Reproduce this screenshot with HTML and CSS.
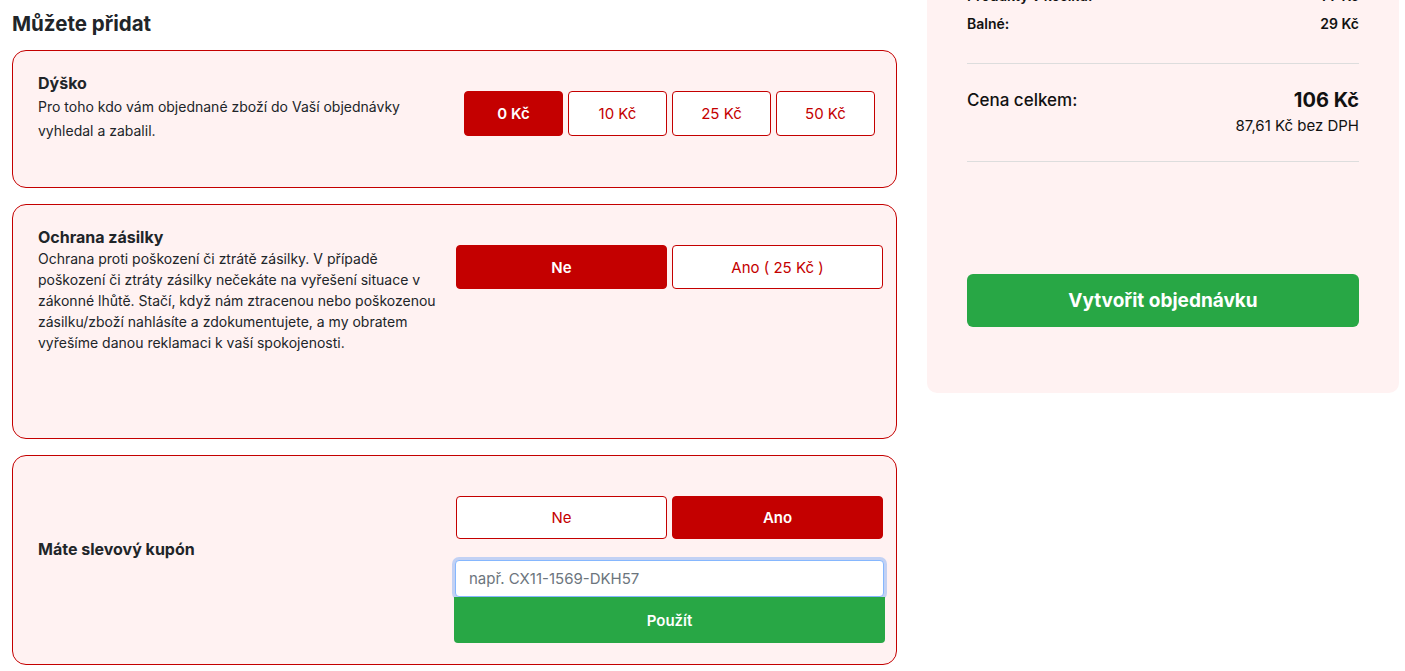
FILE: index.html
```html
<!DOCTYPE html>
<html lang="cs">
<head>
    <meta charset="UTF-8">
    <meta name="viewport" content="width=device-width, initial-scale=1.0">
    <title>Košík</title>
    <link rel="stylesheet" href="styles.css">
</head>
<body>
    <div class="checkout">
        <div class="extras">
            <h2 class="extras-title">Můžete přidat</h2>

            <div class="extra-card extra-card--tip">
                <div class="extra-text">
                    <h3 class="extra-name">Dýško</h3>
                    <p class="extra-desc extra-desc--loose">Pro toho kdo vám objednané zboží do Vaší objednávky vyhledal a zabalil.</p>
                </div>
                <div class="extra-options">
                    <div class="option-group option-group--center">
                        <button class="option-button option-button--small active">0 Kč</button>
                        <button class="option-button option-button--small">10 Kč</button>
                        <button class="option-button option-button--small">25 Kč</button>
                        <button class="option-button option-button--small">50 Kč</button>
                    </div>
                </div>
            </div>

            <div class="extra-card extra-card--protect">
                <div class="extra-text">
                    <h3 class="extra-name">Ochrana zásilky</h3>
                    <p class="extra-desc">Ochrana proti poškození či ztrátě zásilky. V případě poškození či ztráty zásilky nečekáte na vyřešení situace v zákonné lhůtě. Stačí, když nám ztracenou nebo poškozenou zásilku/zboží nahlásíte a zdokumentujete, a my obratem vyřešíme danou reklamaci k vaší spokojenosti.</p>
                </div>
                <div class="extra-options">
                    <div class="option-group">
                        <button class="option-button active">Ne</button>
                        <button class="option-button">Ano ( 25 Kč )</button>
                    </div>
                </div>
            </div>

            <div class="extra-card extra-card--coupon">
                <div class="extra-text extra-text--middle">
                    <h3 class="extra-name">Máte slevový kupón</h3>
                </div>
                <div class="extra-options">
                    <div class="option-group">
                        <button class="option-button option-button--slim">Ne</button>
                        <button class="option-button option-button--slim active">Ano</button>
                    </div>
                    <div class="coupon-form">
                        <input class="coupon-input" type="text" placeholder="např. CX11-1569-DKH57">
                        <button class="coupon-apply">Použít</button>
                    </div>
                </div>
            </div>
        </div>

        <aside class="summary">
            <div class="summary-row">
                <span>Produkty v košíku:</span>
                <span>77 Kč</span>
            </div>
            <div class="summary-row">
                <span>Balné:</span>
                <span>29 Kč</span>
            </div>
            <hr class="summary-line">
            <div class="summary-total">
                <span class="total-label">Cena celkem:</span>
                <div class="total-values">
                    <div class="total-price">106 Kč</div>
                    <div class="total-net">87,61 Kč bez DPH</div>
                </div>
            </div>
            <hr class="summary-line summary-line--bottom">
            <button class="order-button">Vytvořit objednávku</button>
        </aside>
    </div>
</body>
</html>
```

FILE: styles.css
```css
* {
    margin: 0;
    padding: 0;
    box-sizing: border-box;
}

body {
    font-family: Inter, "Noto Sans", sans-serif;
    color: #212529;
    background: #fff;
}

.checkout {
    display: grid;
    grid-template-columns: 885px 472px;
    column-gap: 30px;
    align-items: start;
    padding: 0 6px 0 12px;
}

.extras-title {
    font-size: 20.5px;
    line-height: 24px;
    font-weight: 700;
    margin: 12px 0 14px;
}

.extra-card {
    display: flex;
    background: #fff2f2;
    border: 1px solid #c40000;
    border-radius: 14px;
    padding: 22px 13px 21px 25px;
    margin-bottom: 16px;
}

.extra-card--tip {
    padding-bottom: 44px;
}

.extra-card--protect {
    padding-bottom: 85px;
}

.extra-text {
    width: 418px;
    flex-shrink: 0;
    padding-right: 14px;
}

.extra-text--middle {
    align-self: center;
    margin-top: 2px;
    margin-bottom: 25px;
}

.extra-name {
    font-size: 16px;
    line-height: 20px;
    font-weight: 700;
}

.extra-desc {
    font-size: 14px;
    line-height: 21px;
    margin-top: 1px;
}

.extra-desc--loose {
    line-height: 24px;
    margin-top: 2px;
}

.extra-options {
    flex: 1;
    margin-top: 18px;
}

.option-group {
    display: flex;
    gap: 5px;
}

.option-group--center {
    justify-content: center;
}

.option-button {
    flex: 1;
    height: 44px;
    background: #fff;
    border: 1px solid #c40000;
    border-radius: 4px;
    color: #c40000;
    font-family: inherit;
    font-size: 15px;
    font-weight: 400;
    cursor: pointer;
}

.option-button--small {
    flex: 0 0 99px;
    height: 45px;
}

.option-button--slim {
    height: 43px;
}

.option-button.active {
    background: #c40000;
    color: #fff;
    font-weight: 600;
}

.coupon-form {
    display: flex;
    flex-direction: column;
    margin: 21px -2px 0;
}

.coupon-input {
    height: 37px;
    margin: 0 1px;
    padding: 0 13px;
    border: 1px solid #86b7fe;
    border-radius: 4px;
    box-shadow: 0 0 0 3px rgba(13, 110, 253, 0.25);
    font-family: inherit;
    font-size: 15px;
    color: #212529;
    background: #fff;
    outline: none;
}

.coupon-input::placeholder {
    color: #6c757d;
}

.coupon-apply {
    height: 46px;
    background: #28a745;
    border: none;
    border-radius: 0 0 4px 4px;
    color: #fff;
    font-family: inherit;
    font-size: 15px;
    font-weight: 600;
    cursor: pointer;
}

.summary {
    margin-top: -44px;
    background: #fff2f2;
    border-radius: 10px;
    padding: 30px 40px 66px;
    color: #111;
}

.summary-row {
    display: flex;
    justify-content: space-between;
    font-size: 14px;
    line-height: 20px;
    font-weight: 600;
    margin-bottom: 8px;
}

.summary-line {
    border: none;
    border-top: 1px solid #ddd;
    margin: 29px 0 24px;
}

.summary-line--bottom {
    margin: 25px 0 112px;
}

.summary-total {
    display: flex;
    justify-content: space-between;
}

.total-label {
    font-size: 17px;
    line-height: 24px;
    font-weight: 500;
}

.total-values {
    text-align: right;
}

.total-price {
    font-size: 20px;
    line-height: 24px;
    font-weight: 700;
}

.total-net {
    font-size: 15px;
    line-height: 20px;
    margin-top: 4px;
}

.order-button {
    width: 100%;
    height: 53px;
    background: #28a745;
    border: none;
    border-radius: 6px;
    color: #fff;
    font-family: inherit;
    font-size: 19px;
    font-weight: 700;
    cursor: pointer;
}
```
